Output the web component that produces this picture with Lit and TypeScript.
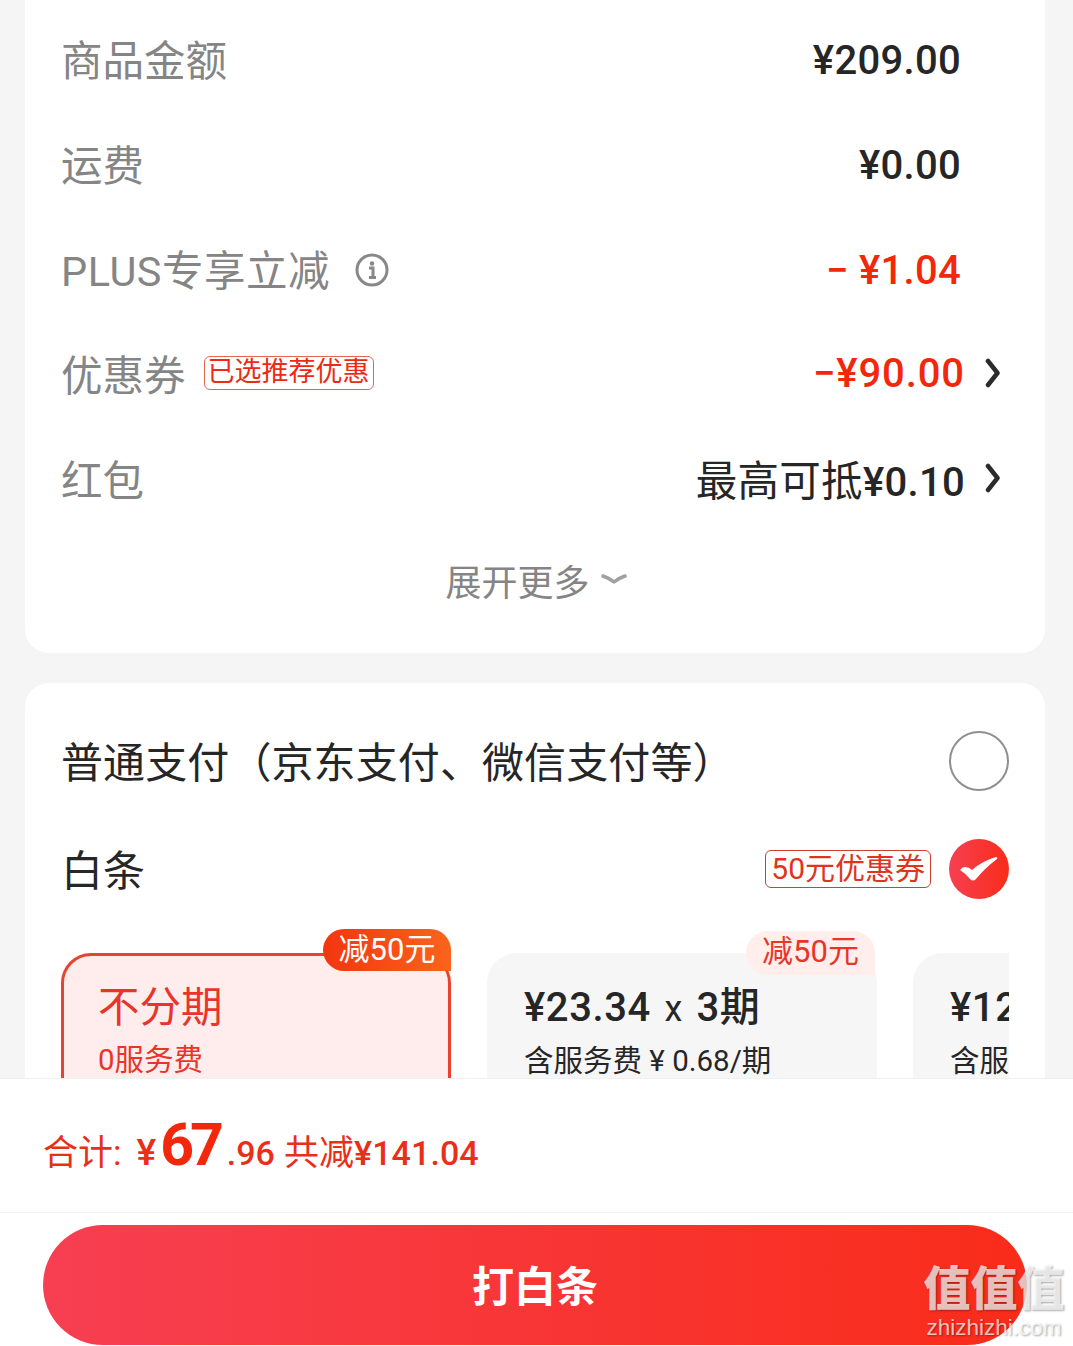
import { css, html, LitElement } from 'lit';
import { customElement } from 'lit/decorators.js';

const chevron = html`<svg class="chevron" width="16" height="30" viewBox="0 0 16 30">
  <path d="M3 3 L12.5 15 L3 27" fill="none" stroke="#2b2b2b" stroke-width="4.5" stroke-linecap="round" stroke-linejoin="round" />
</svg>`;

@customElement('app-root')
export class AppRoot extends LitElement {
  static styles = css`
    :host {
      display: flex;
      flex-direction: column;
      position: relative;
      width: 1073px;
      height: 1346px;
      overflow: hidden;
      background: #f5f5f5;
      color: #262626;
      font-family: Roboto, 'Noto Sans CJK SC', sans-serif;
    }
    .scroll {
      height: 1078px;
      flex: none;
      overflow: hidden;
      padding: 0 28px 0 25px;
    }
    .card {
      background: #fff;
      border-radius: 24px;
    }
    .summary {
      height: 653px;
      border-radius: 0 0 24px 24px;
      padding: 8px 44px 0 37px;
      box-sizing: border-box;
      display: flex;
      flex-direction: column;
    }
    .row {
      height: 105px;
      flex: none;
      display: flex;
      align-items: center;
      justify-content: space-between;
    }
    .label {
      display: flex;
      align-items: center;
      margin-left: -1px;
      padding-bottom: 5px;
      font-size: 41.5px;
      color: #858585;
    }
    .plus {
      letter-spacing: 0.5px;
    }
    .value {
      font-size: 40px;
      font-weight: 500;
      letter-spacing: 0.3px;
      margin-right: 40px;
    }
    .red {
      color: #f2270c;
    }
    .link {
      display: flex;
      align-items: center;
      gap: 20px;
      margin-right: 0;
      margin-bottom: 5px;
    }
    .coupon-value {
      letter-spacing: 0.9px;
    }
    .cjk {
      font-size: 41.5px;
      font-weight: 400;
    }
    .tag {
      margin-left: 18px;
      padding: 0 3px;
      height: 32px;
      line-height: 31px;
      font-size: 27px;
      color: #ee2a14;
      border: 1px solid #e5664f;
      border-radius: 6px;
    }
    .info {
      margin: 3px 0 0 25px;
    }
    .more {
      display: flex;
      align-items: center;
      justify-content: center;
      gap: 11px;
      margin-top: 21px;
      padding-left: 9px;
      font-size: 36px;
      color: #858585;
    }
    .pay {
      margin-top: 30px;
      padding: 24px 36px 0 37px;
      height: 500px;
    }
    .option {
      height: 108px;
      display: flex;
      align-items: center;
      justify-content: space-between;
      font-size: 42px;
    }
    .option-text {
      margin: 0 0 4px -1px;
      letter-spacing: 0.1px;
    }
    .radio {
      width: 60px;
      height: 60px;
      box-sizing: border-box;
      border: 2px solid #8f8f8f;
      border-radius: 50%;
    }
    .check {
      display: block;
      width: 60px;
      height: 60px;
    }
    .baitiao-right {
      display: flex;
      align-items: center;
      gap: 18px;
    }
    .coupon {
      height: 36px;
      line-height: 35px;
      padding: 0 5px;
      font-size: 30px;
      color: #e0341e;
      border: 1px solid #d0402c;
      border-radius: 6px;
    }
    .plans {
      display: flex;
      gap: 36px;
      overflow: hidden;
      padding-top: 30px;
      margin: 0 0 0 -1px;
    }
    .plan {
      position: relative;
      flex: none;
      width: 390px;
      height: 170px;
      box-sizing: border-box;
      padding: 30px 37px;
      border-radius: 30px;
      background: #f6f6f6;
    }
    .plan.on {
      background: #ffeded;
      border: 3px solid #e8432f;
      padding: 27px 34px;
      color: #e8352a;
    }
    .plan-title {
      font-size: 40px;
      font-weight: 500;
      letter-spacing: 0.6px;
      line-height: 50px;
      white-space: nowrap;
    }
    .plan.on .plan-title {
      font-size: 41.5px;
      font-weight: 400;
      letter-spacing: 0;
    }
    .times {
      font-weight: 400;
      font-size: 36px;
      margin: 0 4px;
    }
    .plan-sub {
      margin-top: 5px;
      font-size: 29.5px;
      line-height: 44px;
      white-space: nowrap;
    }
    .off {
      position: absolute;
      top: -27px;
      right: -3px;
      width: 128px;
      height: 42px;
      line-height: 42px;
      text-align: center;
      font-size: 31px;
      color: #fff;
      background: linear-gradient(90deg, #f2360f, #fb641c);
      border-radius: 22px 22px 0 22px;
    }
    .off.soft {
      top: -22px;
      right: 2px;
      width: 129px;
      height: 44px;
      color: #e8352a;
      background: #ffeeec;
    }
    .footer {
      flex: 1;
      background: #fff;
      border-top: 1px solid #f0f0f0;
      display: flex;
      flex-direction: column;
    }
    .total {
      height: 134px;
      box-sizing: border-box;
      padding: 0 0 0 43px;
      display: flex;
      align-items: baseline;
      border-bottom: 1px solid #f2f2f2;
      color: #ea2f18;
      font-size: 35px;
      line-height: 132px;
      white-space: nowrap;
    }
    .yen {
      margin: 0 4px 0 15px;
      font-size: 37px;
      font-weight: 500;
    }
    .big {
      font-size: 59px;
      font-weight: 700;
      letter-spacing: -4px;
      color: #f2270c;
    }
    .cents {
      font-size: 34px;
      font-weight: 500;
      margin-right: 9px;
      margin-left: 7px;
    }
    .saved {
      font-weight: 500;
      font-size: 34px;
      letter-spacing: 0.1px;
    }
    .saved span {
      font-weight: 400;
      font-size: 35px;
      letter-spacing: 0;
    }
    .btn {
      margin: 12px 46px 0 43px;
      height: 120px;
      box-sizing: border-box;
      padding-bottom: 4px;
      display: flex;
      align-items: center;
      justify-content: center;
      border-radius: 60px;
      font-size: 42px;
      font-weight: 700;
      color: #fff;
      background: linear-gradient(90deg, #f73f52, #f92c19);
    }
    .mark {
      position: absolute;
      left: 923px;
      top: 1262px;
      width: 142px;
      text-align: center;
      color: rgba(255, 255, 255, 0.72);
      text-shadow: 1px 1px 2px rgba(0, 0, 0, 0.35);
      pointer-events: none;
    }
    .mark-zh {
      font-size: 47px;
      font-weight: 900;
      line-height: 54px;
      white-space: nowrap;
    }
    .mark-en {
      font-family: 'Liberation Sans', sans-serif;
      font-size: 22.5px;
      line-height: 24px;
      white-space: nowrap;
    }
  `;

  render() {
    return html`
      <div class="scroll">
        <section class="card summary">
          <div class="row"><span class="label">商品金额</span><span class="value">¥209.00</span></div>
          <div class="row"><span class="label">运费</span><span class="value">¥0.00</span></div>
          <div class="row">
            <span class="label"><span class="plus">PLUS专享立减</span>
              <svg class="info" width="34" height="34" viewBox="0 0 34 34">
                <circle cx="17" cy="17" r="15" fill="none" stroke="#888" stroke-width="3" />
                <circle cx="17" cy="10.5" r="2.2" fill="#888" />
                <path d="M14 15h4v9M14 24.5h7" fill="none" stroke="#888" stroke-width="3" />
              </svg>
            </span>
            <span class="value red">−&nbsp;¥1.04</span>
          </div>
          <div class="row">
            <span class="label">优惠券<span class="tag">已选推荐优惠</span></span>
            <span class="value red link"><span class="coupon-value">−¥90.00</span>${chevron}</span>
          </div>
          <div class="row">
            <span class="label">红包</span>
            <span class="value link"><span><span class="cjk">最高可抵</span>¥0.10</span>${chevron}</span>
          </div>
          <div class="more">展开更多
            <svg width="26" height="14" viewBox="0 0 26 14">
              <path d="M2 3 Q8 5 13 9 Q18 5 24 3" fill="none" stroke="#a0a0a0" stroke-width="3.5" stroke-linecap="round" stroke-linejoin="round" />
            </svg>
          </div>
        </section>

        <section class="card pay">
          <div class="option"><span class="option-text">普通支付（京东支付、微信支付等）</span><span class="radio"></span></div>
          <div class="option">
            <span class="option-text">白条</span>
            <span class="baitiao-right">
              <span class="coupon">50元优惠券</span>
              <svg class="check" viewBox="0 0 60 60">
                <defs>
                  <linearGradient id="g" x1="0" x2="1" y1="0" y2="0">
                    <stop offset="0" stop-color="#f73f52" />
                    <stop offset="1" stop-color="#f92c19" />
                  </linearGradient>
                </defs>
                <circle cx="30" cy="30" r="30" fill="url(#g)" />
                <path d="M11 31 Q13 28 16 28 Q20 28 23 31 Q33 22 47 18 Q49 18 48 20 Q36 29 27 40 Q24 43 21 40 Q16 34 11 31 Z" fill="#fff" />
              </svg>
            </span>
          </div>
          <div class="plans">
            <div class="plan on">
              <span class="off">减50元</span>
              <div class="plan-title">不分期</div>
              <div class="plan-sub">0服务费</div>
            </div>
            <div class="plan">
              <span class="off soft">减50元</span>
              <div class="plan-title">¥23.34<span class="times"> x </span>3期</div>
              <div class="plan-sub">含服务费 ¥ 0.68/期</div>
            </div>
            <div class="plan">
              <div class="plan-title">¥12.11<span class="times"> x </span>6期</div>
              <div class="plan-sub">含服务费 ¥ 0.68/期</div>
            </div>
          </div>
        </section>
      </div>

      <footer class="footer">
        <div class="total">
          <span>合计:</span><span class="yen">¥</span><span class="big">67</span><span class="cents">.96</span>
          <span class="saved"><span>共减</span>¥141.04</span>
        </div>
        <div class="btn">打白条</div>
      </footer>

      <div class="mark">
        <div class="mark-zh">值值值</div>
        <div class="mark-en">zhizhizhi.com</div>
      </div>
    `;
  }
}
